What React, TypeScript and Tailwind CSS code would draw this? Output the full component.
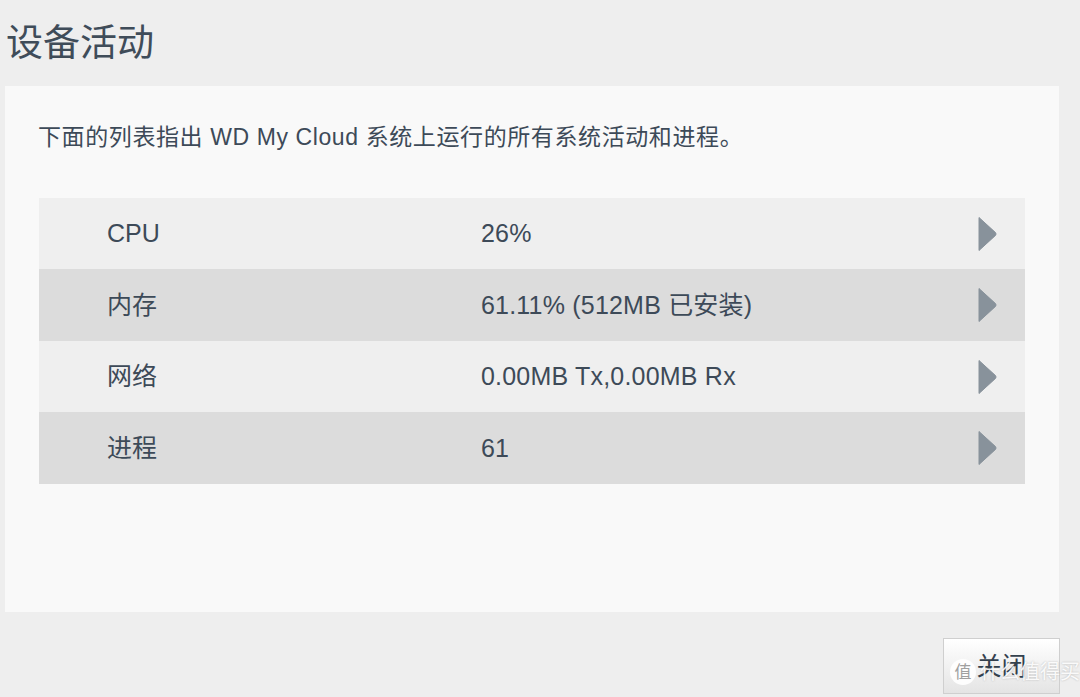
import React from "react";

type Row = { label: string; value: string };

const rows: Row[] = [
  { label: "CPU", value: "26%" },
  { label: "内存", value: "61.11% (512MB 已安装)" },
  { label: "网络", value: "0.00MB Tx,0.00MB Rx" },
  { label: "进程", value: "61" },
];

const font = {
  fontFamily:
    '"Liberation Sans", Arial, "Noto Sans CJK SC", sans-serif',
};

function Chevron() {
  return (
    <svg width="19" height="36" viewBox="0 0 19 36" className="block">
      <path
        d="M1 1.5 L17.5 16.6 Q18.6 18 17.5 19.4 L1 34.5 Z"
        fill="#88929b"
        stroke="#88929b"
        strokeWidth="1"
        strokeLinejoin="round"
      />
    </svg>
  );
}

export default function App() {
  return (
    <div
      className="w-[1080px] h-[697px] bg-[#eeeeee] overflow-hidden text-[#3d4a58]"
      style={font}
    >
      <div className="h-[86px] flex items-center pl-[6px]">
        <h1 className="text-[37px] leading-none text-[#3f4c59] font-normal">
          设备活动
        </h1>
      </div>

      <div className="ml-[5px] w-[1054px] h-[526px] bg-[#f9f9f9] pt-[37px]">
        <p className="pl-[33px] text-[23px] leading-[28px] tracking-[0.6px]">
          下面的列表指出 WD My Cloud 系统上运行的所有系统活动和进程。
        </p>

        <div className="ml-[34px] w-[986px] mt-[47px]">
          {rows.map((r, i) => (
            <div
              key={r.label}
              className={`flex items-center ${
                i % 2 === 0 ? "bg-[#efefef] h-[71px]" : "bg-[#dcdcdc] h-[72px]"
              }`}
            >
              <div className="w-[442px] pl-[68px] text-[25px] leading-none">
                {r.label}
              </div>
              <div className="flex-1 text-[25px] leading-none tracking-[0.2px]">
                {r.value}
              </div>
              <div className="pr-[28px]">
                <Chevron />
              </div>
            </div>
          ))}
        </div>
      </div>

      <div className="flex justify-end pr-[20px] pt-[26px]">
        <div className="relative">
          <button className="w-[117px] h-[56px] border border-[#cfcfcf] bg-gradient-to-b from-[#ffffff] to-[#e4e4e4] text-[25px] text-[#34414e] leading-none">
            关闭
          </button>
          <div className="absolute left-[7px] top-[21px] flex items-center gap-[4px] pointer-events-none">
            <span className="w-[26px] h-[26px] rounded-full bg-white/90 flex items-center justify-center text-[17px] text-[#a0a0a0] leading-none">
              值
            </span>
            <span className="text-[20px] leading-none text-white/90 [text-shadow:0_0_2px_rgba(0,0,0,0.25)] whitespace-nowrap">
              什么值得买
            </span>
          </div>
        </div>
      </div>
    </div>
  );
}
